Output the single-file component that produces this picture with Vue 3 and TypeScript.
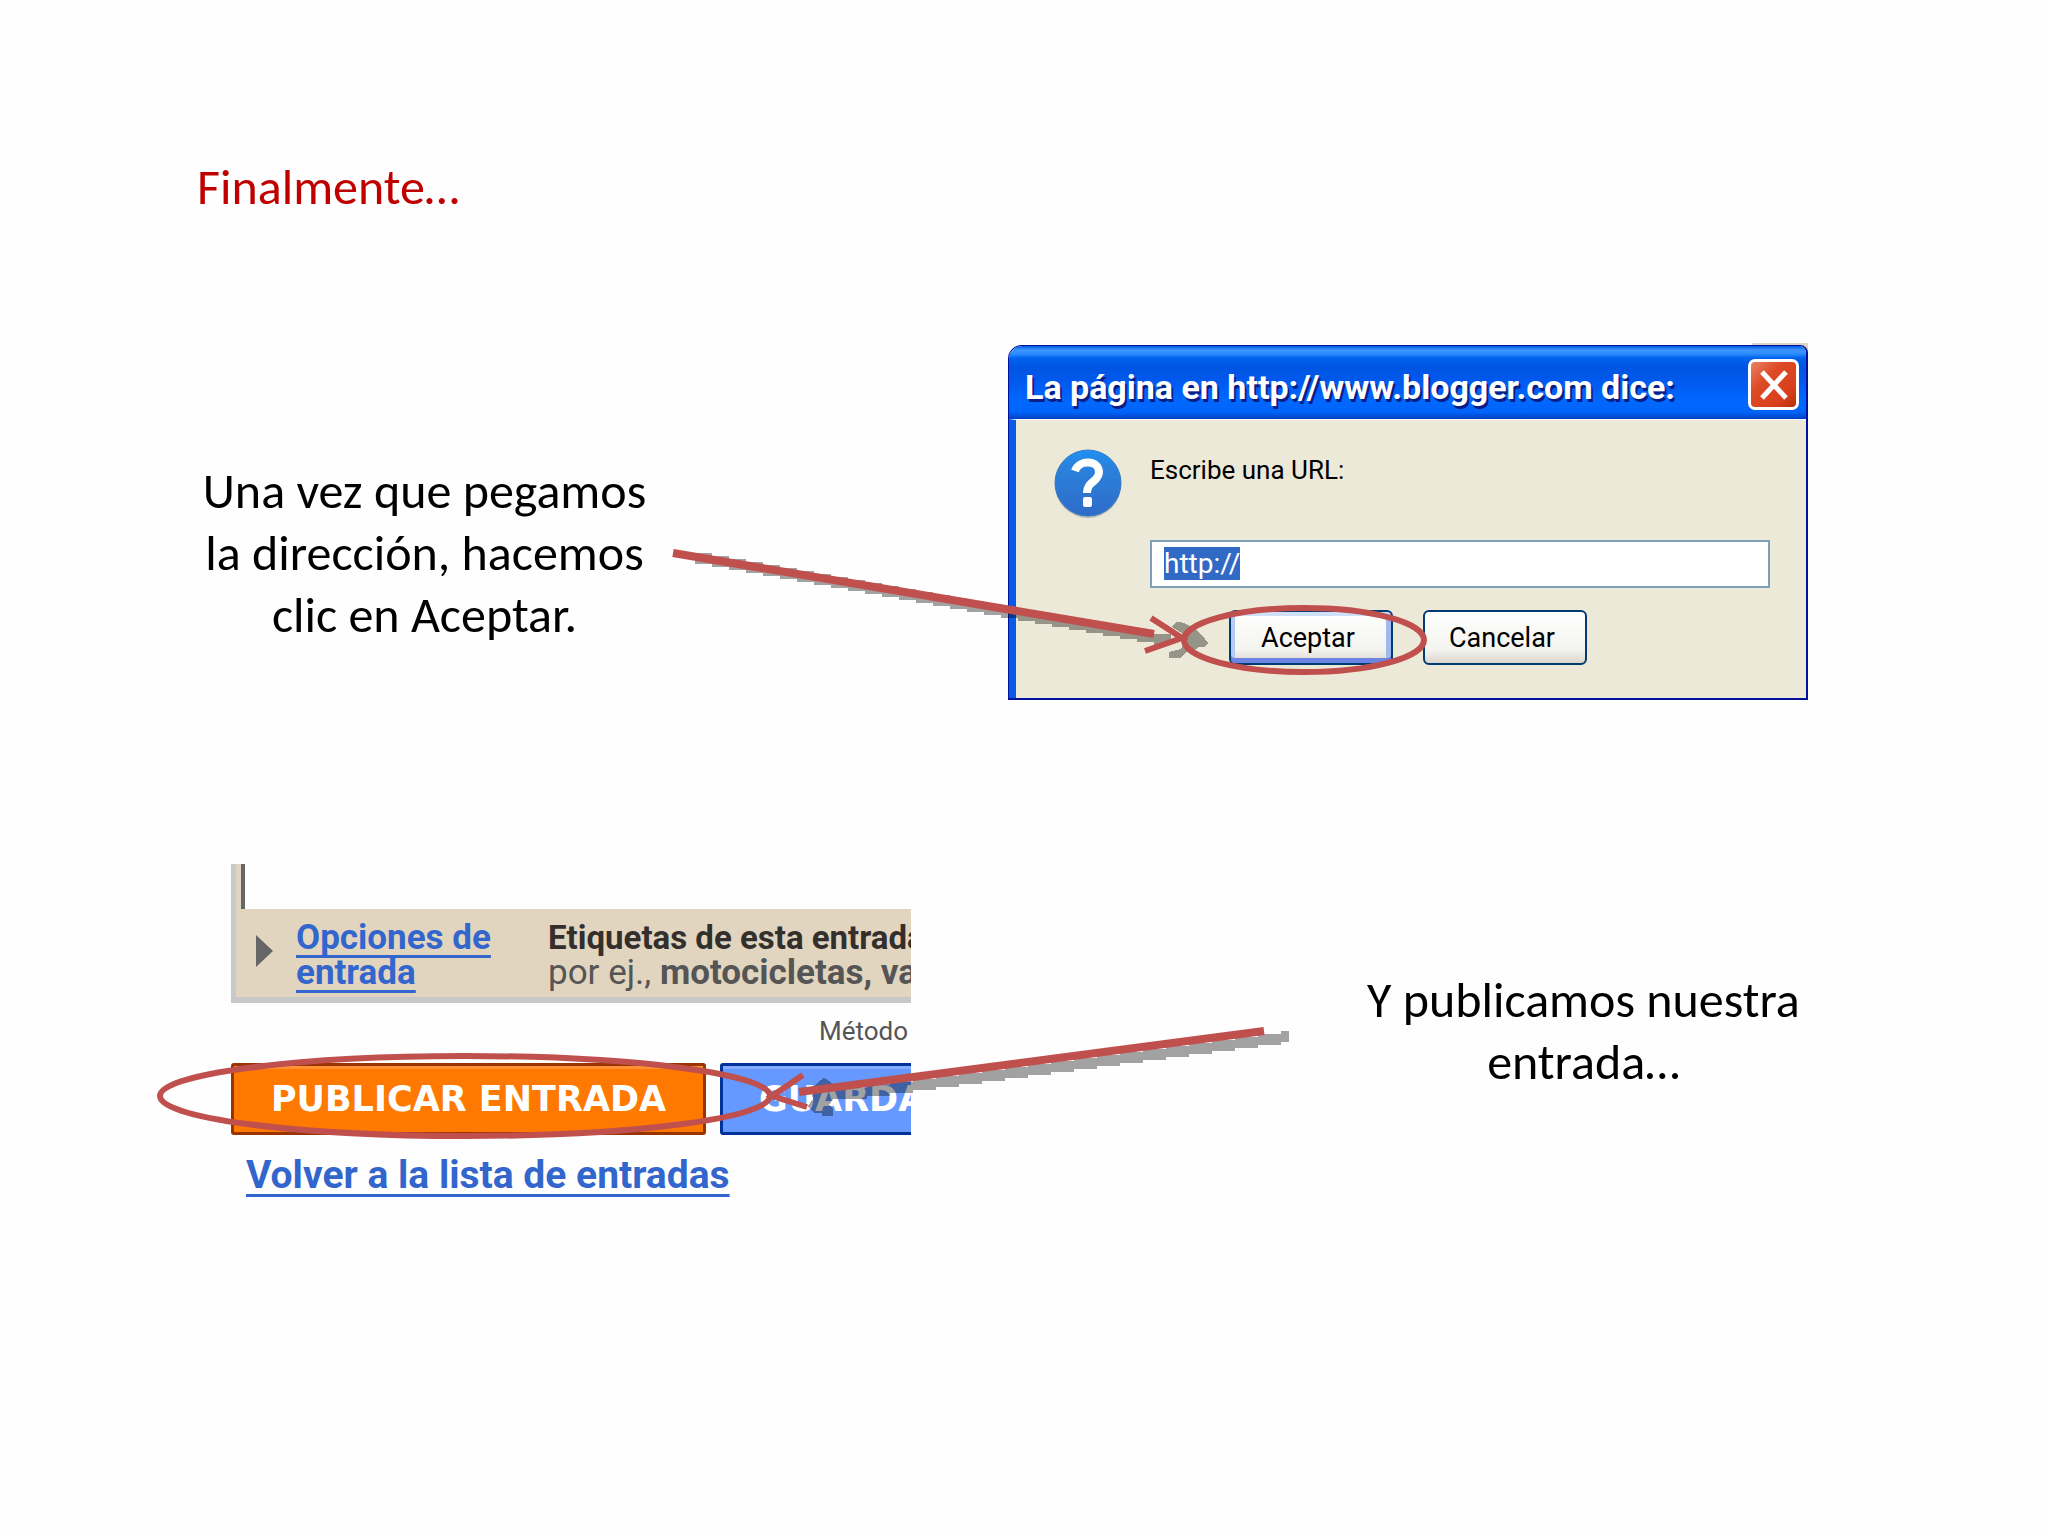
<script setup lang="ts">
import { onMounted, ref } from 'vue'

const url = ref('http://')
const urlBox = ref<HTMLInputElement | null>(null)

onMounted(() => {
  urlBox.value?.focus()
  urlBox.value?.select()
})

// Builds the stepped outline of an arrow's hard shadow, one block per step.
function steps(x: number, y: number, dx: number, dy: number, height: number, count: number): string {
  const width = Math.abs(dx)
  let d = ''
  for (let i = 0; i < count; i++) {
    d += `M${x + i * dx} ${y + i * dy}h${width}v${height}h${-width}z`
  }
  return d
}

const firstShadow = steps(695, 553, 17, 3, 11, 28)
const secondShadow = steps(1281, 1031, 8, 0, 11, 1) + steps(1258, 1034, -23, 3, 11, 19)
</script>

<template>
  <main class="slide">
    <h1>Finalmente…</h1>

    <section class="row row-url">
      <p class="note note-left">Una vez que pegamos<br>la dirección, hacemos<br>clic en Aceptar.</p>

      <div class="figure dialog-figure">
        <form class="dialog" @submit.prevent>
          <header class="title-bar">
            <h2>La página en http://www.blogger.com dice:</h2>
            <button class="close" type="button" aria-label="Cerrar">
              <svg viewBox="0 0 30 30" width="30" height="30" aria-hidden="true">
                <path d="M3 2L27 28M27 2L3 28" stroke="#fff" stroke-width="5" />
              </svg>
            </button>
          </header>
          <div class="dialog-body">
            <svg class="question" viewBox="0 0 68 70" width="68" height="70" aria-hidden="true">
              <defs>
                <linearGradient id="ball" x1="0" y1="0" x2="0" y2="1">
                  <stop offset="0" stop-color="#1e90f4" />
                  <stop offset="0.25" stop-color="#2a82dc" />
                  <stop offset="1" stop-color="#2f6cc8" />
                </linearGradient>
              </defs>
              <circle cx="34" cy="36" r="33" fill="#b9bab2" />
              <circle cx="34" cy="34" r="33" fill="url(#ball)" stroke="#2f78c4" stroke-width="1" />
              <path d="M21 22C25 10 45 11 45 23C45 33 33 32 33 44" fill="none" stroke="#fff" stroke-width="8" />
              <rect x="29" y="48" width="9" height="10" rx="2" fill="#fff" />
            </svg>
            <div class="fields">
              <label for="url">Escribe una URL:</label>
              <input id="url" ref="urlBox" v-model="url" type="text">
              <div class="actions">
                <button class="xp default" type="submit">Aceptar</button>
                <button class="xp" type="button">Cancelar</button>
              </div>
            </div>
          </div>
        </form>
        <svg class="marks marks-url" viewBox="660 540 780 150" width="780" height="150" aria-hidden="true">
          <g opacity="0.36" shape-rendering="crispEdges">
            <path :d="firstShadow" />
            <path d="M1172 627L1176 622H1181L1186 624L1195 629L1203 636L1208 643L1204 647H1199L1192 652H1186L1181 658H1169V652L1181 649L1186 640L1182 633Z" />
          </g>
          <g fill="none" stroke="#c0504d">
            <path d="M673 553L1154 634" stroke-width="8" />
            <path d="M1151 618L1182 638L1145 651" stroke-width="6" />
            <ellipse cx="1304" cy="640" rx="120" ry="32" stroke-width="6" />
          </g>
        </svg>
      </div>
    </section>

    <section class="row row-publish">
      <div class="figure editor-figure">
        <div class="editor">
          <div class="text-area-edge"></div>
          <div class="options">
            <svg class="expand" viewBox="0 0 17 32" width="17" height="32" aria-hidden="true">
              <path d="M0 0L17 16L0 32Z" fill="#666" />
            </svg>
            <a class="options-link" href="#opciones">Opciones de entrada</a>
            <div class="tags">
              <div class="tags-title">Etiquetas de esta entrada:</div>
              <div class="tags-hint">por ej., <b>motocicletas, vacaciones</b></div>
            </div>
          </div>
          <div class="shortcuts">Método</div>
          <div class="buttons">
            <button class="publish" type="button">PUBLICAR ENTRADA</button>
            <button class="save" type="button">GUARDAR</button>
          </div>
          <a class="back" href="#entradas">Volver a la lista de entradas</a>
        </div>
        <svg class="marks marks-publish" viewBox="150 1020 1150 130" width="1150" height="130" aria-hidden="true">
          <g opacity="0.36" shape-rendering="crispEdges">
            <path :d="secondShadow" />
            <path d="M844 1090V1099H833L829 1105L833 1109V1116H822V1113H814L808 1106L813 1099L811 1089L818 1082L824 1078L831 1082L836 1090Z" />
          </g>
          <g fill="none" stroke="#c0504d">
            <path d="M1264 1031L799 1092" stroke-width="8" />
            <path d="M803 1075L772 1096L807 1107" stroke-width="6" />
            <ellipse cx="465" cy="1096" rx="305" ry="40" stroke-width="6" />
          </g>
        </svg>
      </div>

      <p class="note note-right">Y publicamos nuestra<br>entrada…</p>
    </section>
  </main>
</template>

<style>
body {
  margin: 0;
  background: #fefefe;
}
</style>

<style scoped>
.slide {
  box-sizing: border-box;
  min-height: 100vh;
  padding: 156px 40px 40px 197px;
  overflow: hidden;
  color: #000;
  font-family: Carlito, Lato, sans-serif;
  font-size: 50px;
  line-height: 62px;
}
h1 {
  margin: 0;
  color: #c00000;
  font-size: 50px;
  font-weight: 400;
}
.row {
  display: flex;
  align-items: flex-start;
}
.row-url {
  margin-top: 127px;
}
.row-publish {
  margin-top: 164px;
  padding-left: 34px;
}
.note {
  margin: 0;
  text-align: center;
  white-space: nowrap;
}
.note-left {
  width: 455px;
  margin: 115px 356px 0 0;
}
.note-right {
  margin: 105px 0 0 456px;
}
.figure {
  position: relative;
  font-family: Roboto, "Liberation Sans", sans-serif;
}
.dialog-figure {
  flex: 0 0 800px;
}
.dialog-figure::before {
  content: "";
  position: absolute;
  z-index: -1;
  top: -2px;
  right: 0;
  width: 56px;
  height: 12px;
  background: #ddd3c4;
}
.editor-figure {
  flex: none;
  width: 680px;
}
.marks {
  position: absolute;
  pointer-events: none;
}
.marks-url {
  left: -348px;
  top: 195px;
}
.marks-publish {
  left: -81px;
  top: 156px;
}

.dialog {
  border: solid #00129c;
  border-width: 1px 2px 2px 1px;
  border-radius: 14px 8px 0 0;
  background: #ece9d8;
  overflow: hidden;
}
.title-bar {
  box-sizing: border-box;
  display: flex;
  justify-content: space-between;
  align-items: center;
  height: 73px;
  padding: 4px 7px 0 16px;
  background: linear-gradient(#0058e0 0, #3d95ff 4px, #2a8cff 8px, #0062ee 12px, #0054e2 22px, #005cf2 40px, #0068ff 54px, #0064fa 66px, #0040c0 73px);
}
h2 {
  margin: 0;
  padding-top: 4px;
  color: #fff;
  font-size: 34px;
  font-weight: 700;
  line-height: 40px;
  white-space: nowrap;
  text-shadow: 2px 3px 0 #0a1f86;
}
.close {
  display: flex;
  align-items: center;
  justify-content: center;
  width: 51px;
  height: 51px;
  padding: 0;
  border: 3px solid #fff;
  border-radius: 7px;
  background: linear-gradient(135deg, #e88468, #dd4a26 35%, #d8401a 75%, #b8300c);
}
.dialog-body {
  display: flex;
  align-items: flex-start;
  height: 279px;
  box-sizing: border-box;
  padding: 29px 36px 0 38px;
  border-left: 7px solid #0a5ae8;
  border-top: 1px solid #fff;
}
.question {
  flex: none;
  margin-right: 28px;
}
.fields {
  flex: 1;
  display: flex;
  flex-direction: column;
  padding-top: 6px;
  color: #000;
  font-size: 26px;
  line-height: 30px;
}
#url {
  box-sizing: border-box;
  width: 100%;
  height: 48px;
  margin: 55px 0 22px;
  padding: 0 12px 2px;
  border: 2px solid #7f9db9;
  border-radius: 0;
  outline: none;
  background: #fff;
  color: #000;
  font: 28px/32px Roboto, "Liberation Sans", sans-serif;
}
#url::selection {
  background: #316ac5;
  color: #fff;
}
.actions {
  display: flex;
  gap: 30px;
  padding-left: 79px;
}
.xp {
  box-sizing: border-box;
  width: 164px;
  height: 55px;
  padding: 0 6px 0 0;
  border: 2px solid #003c74;
  border-radius: 6px;
  background: linear-gradient(#fff, #f3f3ef 75%, #dcd5cb);
  color: #000;
  font: 27px/30px Roboto, "Liberation Sans", sans-serif;
}
.default {
  box-shadow: inset 0 4px #cfe0fb, inset 0 -5px #6c84e4, inset 4px 0 #b4caf5, inset -5px 0 #9db9f0;
}

.editor {
  overflow: hidden;
  color: #555;
  white-space: nowrap;
}
.text-area-edge {
  width: 5px;
  height: 45px;
  border-left: 5px solid #c8c8c8;
  border-right: 4px solid #666;
  background: #e2d5c0;
}
.options {
  display: flex;
  align-items: flex-start;
  padding: 11px 0 7px 20px;
  border: solid #c8c8c8;
  border-width: 0 0 6px 5px;
  background: #e2d5c0;
  line-height: 35px;
}
.expand {
  flex: none;
  margin: 15px 23px 0 0;
}
a {
  color: #3366cc;
  font-weight: 700;
  text-decoration: underline;
  text-decoration-thickness: 3px;
  text-decoration-skip-ink: none;
  text-underline-offset: 6px;
}
.options-link {
  flex: 0 0 220px;
  margin-right: 32px;
  font-size: 35px;
  white-space: normal;
}
.tags {
  flex: none;
}
.tags-title {
  color: #332f2c;
  font-size: 33px;
  font-weight: 700;
}
.tags-hint {
  font-size: 35px;
}
.shortcuts {
  margin: 13px 3px 17px 0;
  font-size: 26px;
  line-height: 30px;
  text-align: right;
}
.buttons {
  display: flex;
  gap: 14px;
}
.buttons button {
  box-sizing: border-box;
  flex: none;
  height: 72px;
  padding: 0 36px;
  border: 3px solid;
  border-radius: 3px;
  color: #fff;
  font: 700 35px/42px "DejaVu Sans", sans-serif;
}
.buttons .publish {
  width: 475px;
  padding: 0;
  border-color: #993300;
  background: #ff7800;
  box-shadow: inset 0 3px #ff9234;
}
.buttons .save {
  border-color: #003399;
  background: #6699ff;
  box-shadow: inset 0 3px #84adff;
}
.back {
  display: block;
  width: max-content;
  margin: 17px 0 0 15px;
  font-size: 39px;
  line-height: 46px;
}
</style>
